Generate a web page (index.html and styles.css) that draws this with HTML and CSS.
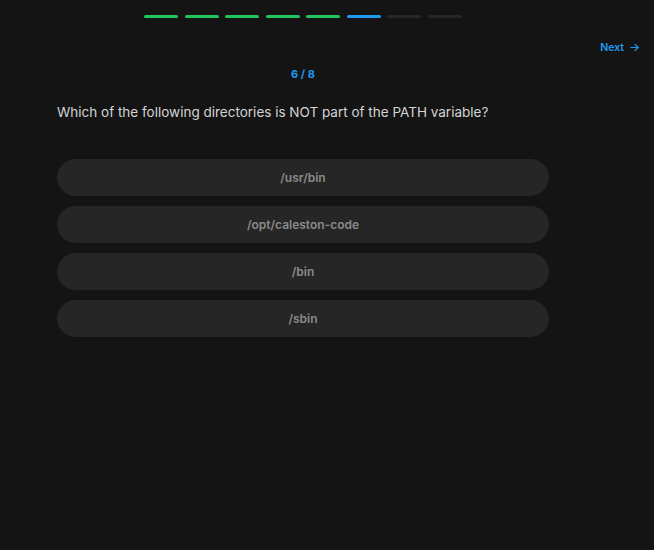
FILE: index.html
```html
<!DOCTYPE html>
<html>
<head>
<meta charset="utf-8">
<link rel="stylesheet" href="styles.css">
</head>
<body>
<div class="page">
  <div class="progress">
    <span class="seg done"></span>
    <span class="seg done"></span>
    <span class="seg done"></span>
    <span class="seg done"></span>
    <span class="seg done"></span>
    <span class="seg current"></span>
    <span class="seg"></span>
    <span class="seg"></span>
  </div>
  <div class="nav">
    <a class="next" href="#">Next
      <svg width="11" height="11" viewBox="0 0 24 24" fill="none" stroke="currentColor" stroke-width="2.5" stroke-linecap="round" stroke-linejoin="round"><path d="M4 12h16"/><path d="M13 5l7 7-7 7"/></svg>
    </a>
  </div>
  <div class="column">
    <div class="count">6 / 8</div>
    <div class="question">Which of the following directories is NOT part of the PATH variable?</div>
    <div class="options">
      <button class="option">/usr/bin</button>
      <button class="option">/opt/caleston-code</button>
      <button class="option">/bin</button>
      <button class="option">/sbin</button>
    </div>
  </div>
</div>
</body>
</html>
```

FILE: styles.css
```css
* { box-sizing: border-box; }
html, body {
  margin: 0;
  padding: 0;
  background: #141414;
  font-family: Inter, "Noto Sans", sans-serif;
}
.page {
  width: 654px;
  height: 550px;
  padding-top: 15px;
}
.progress {
  margin-left: 144px;
  width: 318px;
  display: flex;
  gap: 6.6px;
}
.seg {
  flex: 1;
  height: 3px;
  border-radius: 2px;
  background: #262626;
}
.seg.done { background: #22c55e; }
.seg.current { background: #1d9bf0; }
.nav {
  display: flex;
  justify-content: flex-end;
  padding-right: 14px;
  margin-top: 19px;
  height: 20px;
  align-items: center;
}
.next {
  color: #1d9bf0;
  font-size: 10.5px;
  font-weight: 600;
  text-decoration: none;
  display: flex;
  align-items: center;
  gap: 5px;
}
.column {
  margin-left: 57px;
  width: 492px;
}
.count {
  text-align: center;
  color: #1d9bf0;
  font-size: 11px;
  font-weight: 700;
  margin-top: 10px;
  line-height: 14px;
}
.question {
  color: #d4d4d4;
  font-size: 13.5px;
  line-height: 20px;
  margin-top: 21px;
}
.options {
  margin-top: 37px;
  display: flex;
  flex-direction: column;
  gap: 10px;
}
.option {
  height: 37px;
  border: none;
  border-radius: 999px;
  background: #262626;
  color: #8a8a8a;
  font-family: Inter, "Noto Sans", sans-serif;
  font-size: 12px;
  font-weight: 600;
  padding: 0;
  cursor: pointer;
}
```
